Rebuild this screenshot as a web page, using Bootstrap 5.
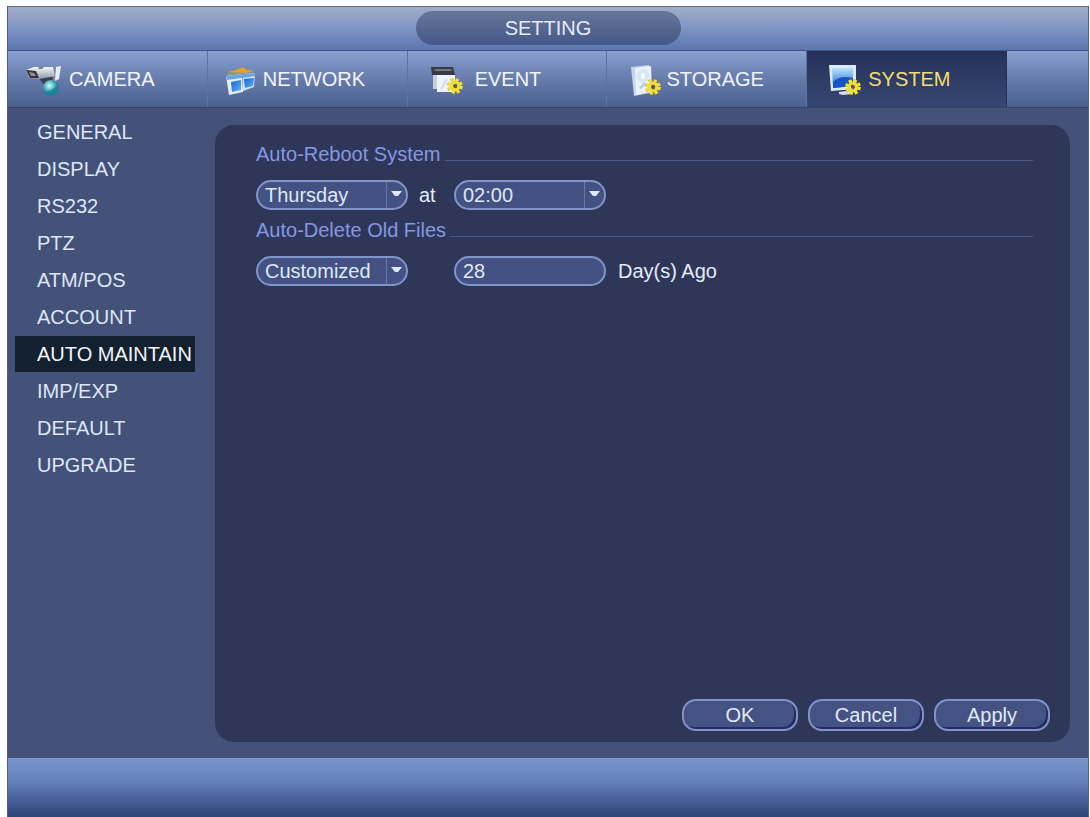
<!DOCTYPE html>
<html lang="en">
<head>
<meta charset="utf-8">
<meta name="viewport" content="width=device-width, initial-scale=1">
<title>Setting</title>
<link href="https://cdn.jsdelivr.net/npm/bootstrap@5.3.0/dist/css/bootstrap.min.css" rel="stylesheet">
<style>
  body { font-family: "Liberation Sans", Arial, sans-serif; font-size: 20px; line-height: 24px; color: #e4ebf8; background: #fff; }
  .dvr { margin: 6px 1px 0 7px; min-height: calc(100vh - 6px); background: #44527a; border-left: 1px solid #4d5b86; border-right: 1px solid #4d5b86; }
  .title-bar { height: 45px; padding-top: 4px; border-top: 1px solid #5f6984; border-bottom: 1px solid #44557f; background: linear-gradient(#a3adca, #8297c3 45%, #5b76af); }
  .title-pill { width: 265px; height: 34px; border-radius: 17px; font-size: 20px; line-height: 34px; color: #e4ebf8; background: linear-gradient(#68769a, #56668f 50%, #455a8c); }
  .tab-bar { display: grid; grid-template-columns: repeat(5, 200fr) 81fr; height: 57px; border-bottom: 1px solid #35456f; background: linear-gradient(#89a0d1, #667cab 50%, #4c6090); }
  .tab-item { display: flex; align-items: center; color: #f2f5fc; text-decoration: none; border-right: 1px solid #5d72a2; gap: 6px; padding-left: 17px; white-space: nowrap; }
  .tab-item svg { flex: none; width: 38px; height: 34px; margin-top: 4px; }
  .tab-item.active { color: #f3dd72; background: linear-gradient(#26305a, #303f68 60%, #364772); border-right-color: #26305a; }
  .tab-wide { gap: 12px; }
  .tab-close { gap: 0; }
  .side-menu { width: 187px; padding: 6px 0 0 7px; gap: 1px; }
  .side-menu a { height: 36px; line-height: 36px; padding-left: 22px; color: #dde6f5; text-decoration: none; white-space: nowrap; }
  .side-menu a.active { color: #f2f5fa; background: #12202f; }
  .panel { margin: 17px 18px 16px 20px; padding: 17px 20px 11px 41px; border-radius: 19px; background: #2f3759; }
  .group-title { font-size: 20px; line-height: 24px; margin-bottom: 14px; color: #8597e2; }
  .group-title::after { content: ""; flex: 1; height: 1px; margin: 0 17px 5px 4px; background: #4c5885; align-self: flex-end; }
  .field { width: 152px; height: 30px; padding: 0 7px; border: 2px solid #8096ca; border-radius: 15px; color: #dfe8f5; background: #435282; line-height: 24px; }
  select.field { appearance: none; background: #435282 url("data:image/svg+xml,%3Csvg xmlns='http://www.w3.org/2000/svg' width='20' height='26'%3E%3Cpath d='M.5 0v26' stroke='%236579ad'/%3E%3Cpath d='M5 9h11l-4 5h-3z' fill='%23dfe9fb'/%3E%3C/svg%3E") no-repeat right 0 center; }
  .slot { width: 46px; padding-left: 11px; }
  .actions { gap: 10px; }
  .action { width: 116px; height: 32px; border: 2px solid #8192c8; border-radius: 14px; color: #e0e9f5; background: #445383; box-shadow: inset -2px -2px 0 #222d61; line-height: 24px; padding: 0; }
  .foot-bar { height: 59px; border-top: 1px solid #8299cb; background: linear-gradient(#7795cb, #6380bb 40%, #466099 70%, #314575); }
</style>
</head>
<body>
<svg width="0" height="0" class="d-block" aria-hidden="true">
  <defs>
    <linearGradient id="blue" x1="0" y1="0" x2="0" y2="1"><stop offset="0" stop-color="#b9e3fb"/><stop offset="1" stop-color="#1765ce"/></linearGradient>
    <linearGradient id="pane" x1="0" y1="0" x2="1" y2="1"><stop offset="0" stop-color="#0f63d2"/><stop offset="1" stop-color="#63b4f5"/></linearGradient>
    <linearGradient id="metal" x1="0" y1="0" x2="0" y2="1"><stop offset="0" stop-color="#f6f7fa"/><stop offset="1" stop-color="#8d98a9"/></linearGradient>
    <radialGradient id="globe" cx=".4" cy=".35"><stop offset="0" stop-color="#d6fbfa"/><stop offset=".5" stop-color="#62c6cc"/><stop offset="1" stop-color="#1f7f9c"/></radialGradient>
    <g id="gear">
      <circle r="6" fill="none" stroke="#c9ad20" stroke-width="4" stroke-dasharray="2.7 2"/>
      <circle r="5" fill="none" stroke="#f1e233" stroke-width="5" stroke-dasharray="2.4 1.53"/>
      <circle r="4" fill="none" stroke="#f3dc35" stroke-width="3"/>
      <circle r="2" fill="#6b5a22"/>
    </g>
  </defs>
</svg>
<div class="dvr d-flex flex-column">
  <header class="title-bar d-flex justify-content-center">
    <h1 class="title-pill text-center m-0 fw-normal">SETTING</h1>
  </header>
  <nav class="tab-bar" aria-label="Sections">
    <a href="#" class="tab-item">
      <svg viewBox="0 0 38 34"><path d="M30 4 36 3 34 16 28 19 26 15z" fill="#7d8596"/><path d="M31 3l5-1-2 13-4 2z" fill="#e9edf6"/><path d="M14 14 28 13 27 19 18 20z" fill="#3a4050"/><path d="M1 6 9 3 28 3 30 12 14 15 4 14z" fill="url(#metal)"/><path d="M1 6 11 7 14 14 5 14z" fill="#33343c"/><path d="M4 8 9 9 11 12 6 12z" fill="#9a8f88"/><path d="M14 3h5l-2 2h-4z" fill="#79808e"/><circle cx="26" cy="24" r="8" fill="url(#globe)"/><path d="M21 28l5-2 6-4-2 6-5 3z" fill="#178590" opacity=".7"/></svg>
      <span>CAMERA</span>
    </a>
    <a href="#" class="tab-item tab-close">
      <svg viewBox="2 0 38 34"><path d="M4 9 17 6 30 6 31 10 20 12 5 12z" fill="#8f9385"/><path d="M5 8 16 5 20 3 24 6 31 7 21 9z" fill="#e2a326"/><path d="M3 12 19 10 20 28 6 31z" fill="#e3effb"/><path d="M20 10 32 9 31 23 20 27z" fill="#cfe3f9"/><path d="M8 18 18 16 18 26 9 28z" fill="url(#pane)"/><path d="M21 15 31 14 30 22 22 24z" fill="url(#pane)"/><path d="M3 12 19 10v4L4 16zM20 10l12-1v3l-12 2z" fill="#69a6e4"/></svg>
      <span>NETWORK</span>
    </a>
    <a href="#" class="tab-item tab-wide">
      <svg viewBox="0 0 38 34"><path d="M6 3h22l2 8H7z" fill="#383b43"/><path d="M9 5h17l1 2H10z" fill="#747780"/><path d="M8 11h4v14H8z" fill="#c9cfd8"/><path d="M12 11h18v17H12z" fill="#eef3fc"/><path d="M15 25l6-11 2 2-6 10z" fill="#cfdff4"/><use href="#gear" transform="translate(30 22)"/></svg>
      <span>EVENT</span>
    </a>
    <a href="#" class="tab-item tab-close">
      <svg viewBox="2 0 38 34"><path d="M9 3 27 1 28 29 12 32z" fill="#c5d5ed"/><path d="M13 4 29 2 30 27 14 31z" fill="#eaf2fd"/><ellipse cx="21" cy="12" rx="6" ry="7" fill="#d8e5f6"/><ellipse cx="21" cy="12" rx="2" ry="3" fill="#f8fbff"/><path d="M17 24l5-6 2 2-5 5z" fill="#b9cbe6"/><use href="#gear" transform="translate(31 23)"/></svg>
      <span class="ps-1">STORAGE</span>
    </a>
    <a href="#" class="tab-item active" aria-current="page">
      <svg viewBox="0 0 38 34"><path d="M5 1 32 1 32 25 7 27z" fill="#dce9f8"/><path d="M8 4 29 4 29 22 9 24z" fill="url(#blue)"/><path d="M9 18c5-5 11-6 20-4v8L9 24z" fill="#1656c4"/><path d="M15 28l7-1 1-1 4 1 1 3-9 1-4-1z" fill="#d5dfef"/><use href="#gear" transform="translate(29 23)"/></svg>
      <span>SYSTEM</span>
    </a>
  </nav>
  <div class="d-flex flex-grow-1">
    <nav class="side-menu d-flex flex-column flex-shrink-0" aria-label="System settings">
      <a href="#">GENERAL</a>
      <a href="#">DISPLAY</a>
      <a href="#">RS232</a>
      <a href="#">PTZ</a>
      <a href="#">ATM/POS</a>
      <a href="#">ACCOUNT</a>
      <a href="#" class="active" aria-current="page">AUTO MAINTAIN</a>
      <a href="#">IMP/EXP</a>
      <a href="#">DEFAULT</a>
      <a href="#">UPGRADE</a>
    </nav>
    <form class="panel d-flex flex-column flex-grow-1">
      <h2 class="group-title d-flex fw-normal">Auto-Reboot System</h2>
      <div class="d-flex align-items-center">
        <select class="field" aria-label="Reboot day"><option>Thursday</option><option>Friday</option></select>
        <label class="slot" for="time">at</label>
        <select class="field" id="time"><option>02:00</option><option>03:00</option></select>
      </div>
      <h2 class="group-title d-flex fw-normal mt-2">Auto-Delete Old Files</h2>
      <div class="d-flex align-items-center">
        <select class="field" aria-label="Delete mode"><option>Customized</option><option>Never</option></select>
        <span class="slot"></span>
        <input class="field" id="days" type="text" value="28">
        <label for="days" class="ms-2 ps-1">Day(s) Ago</label>
      </div>
      <div class="actions d-flex justify-content-end mt-auto">
        <button type="button" class="action">OK</button>
        <button type="button" class="action">Cancel</button>
        <button type="button" class="action">Apply</button>
      </div>
    </form>
  </div>
  <footer class="foot-bar"></footer>
</div>
<script src="https://cdn.jsdelivr.net/npm/bootstrap@5.3.0/dist/js/bootstrap.bundle.min.js"></script>
</body>
</html>
